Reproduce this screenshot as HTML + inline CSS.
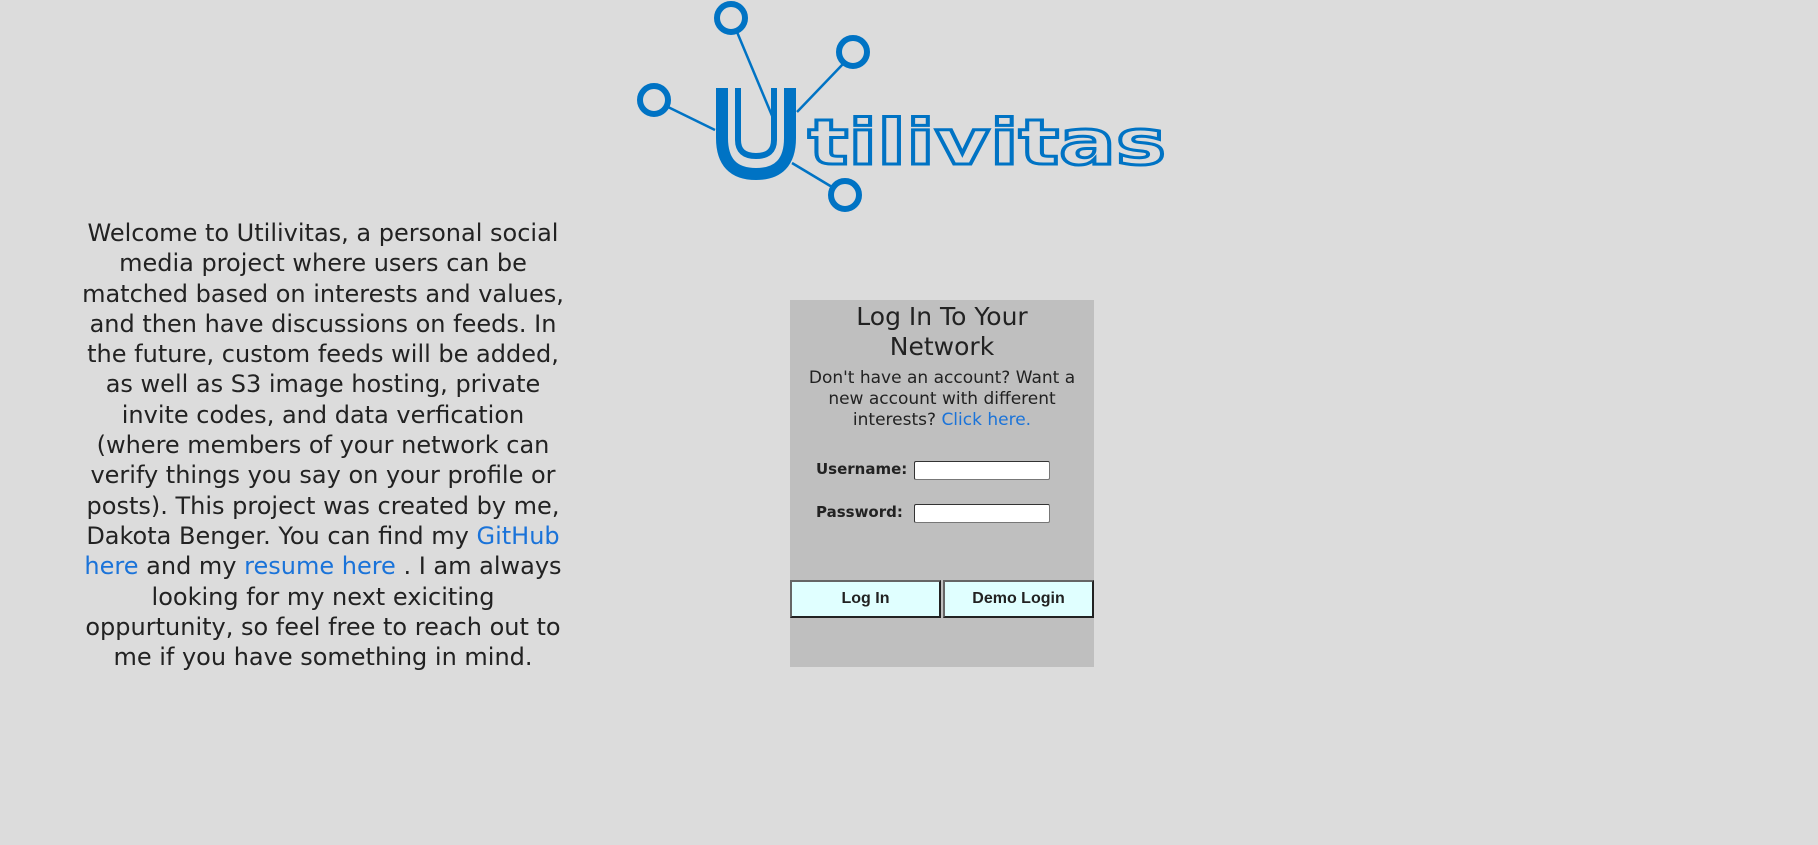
<!DOCTYPE html>
<html><head><style>
body{margin:0;background:#dcdcdc;width:1818px;height:845px;position:relative;overflow:hidden;font-family:"DejaVu Sans","Liberation Sans",sans-serif;color:#222}
.intro{position:absolute;left:63px;top:218px;width:520px;text-align:center;font-size:24px;line-height:30.3px;white-space:nowrap}
a{color:#1a73d9;text-decoration:none}
.box{position:absolute;left:790px;top:300px;width:304px;height:367px;background:#bfbfbf;text-align:center}
.t{font-size:25px;line-height:30px;margin-top:2px}
.s{font-size:17px;line-height:21px;margin-top:6px}
.lab{position:absolute;left:26px;font-weight:bold;font-size:15px}
.inp{position:absolute;left:124px;width:134px;height:17px;background:#fff;border:1px solid #333;border-bottom-color:#777;border-right-color:#777;border-radius:2px}
.btn{position:absolute;top:280px;height:38px;width:151px;background:#e0ffff;border:2px solid #222;border-top-color:#666;border-left-color:#666;box-sizing:border-box;font-family:"Liberation Sans",sans-serif;font-weight:bold;font-size:16px;line-height:34px}
</style></head><body>
<svg style="position:absolute;left:0;top:0" width="1818" height="230">
<g stroke="#0073c4" fill="none">
<line x1="737" y1="32" x2="773" y2="118" stroke-width="2.5"/>
<line x1="843" y1="64" x2="797" y2="112" stroke-width="2.5"/>
<line x1="668" y1="107" x2="715" y2="130" stroke-width="2.5"/>
<line x1="792" y1="163" x2="832" y2="187" stroke-width="2.5"/>
<circle cx="731" cy="18" r="14" stroke-width="6"/>
<circle cx="853" cy="52" r="14" stroke-width="6"/>
<circle cx="654" cy="100" r="14" stroke-width="6"/>
<circle cx="845" cy="195" r="14" stroke-width="6"/>
<path d="M722 88 V138 Q722 174 756 174 Q790 174 790 138 V88" stroke-width="12"/>
<path d="M738 88 V140 Q738 156 756 156 Q774 156 774 140 V88" stroke-width="6"/>
</g>
<text x="808" y="164" font-family="DejaVu Sans" font-size="62" font-weight="bold" fill="none" stroke="#0073c4" stroke-width="3" textLength="358" lengthAdjust="spacingAndGlyphs">tilivitas</text>
</svg>
<div class="intro">Welcome to Utilivitas, a personal social<br>media project where users can be<br>matched based on interests and values,<br>and then have discussions on feeds. In<br>the future, custom feeds will be added,<br>as well as S3 image hosting, private<br>invite codes, and data verfication<br>(where members of your network can<br>verify things you say on your profile or<br>posts). This project was created by me,<br>Dakota Benger. You can find my <a>GitHub</a><br><a>here</a> and my <a>resume here</a> . I am always<br>looking for my next exiciting<br>oppurtunity, so feel free to reach out to<br>me if you have something in mind.</div>
<div class="box">
<div class="t">Log In To Your<br>Network</div>
<div class="s">Don't have an account? Want a<br>new account with different<br>interests? <a>Click here.</a></div>
<div class="lab" style="top:160px">Username:</div><div class="inp" style="top:161px"></div>
<div class="lab" style="top:203px">Password:</div><div class="inp" style="top:204px"></div>
<div class="btn" style="left:0">Log In</div>
<div class="btn" style="left:153px">Demo Login</div>
</div>
</body></html>
